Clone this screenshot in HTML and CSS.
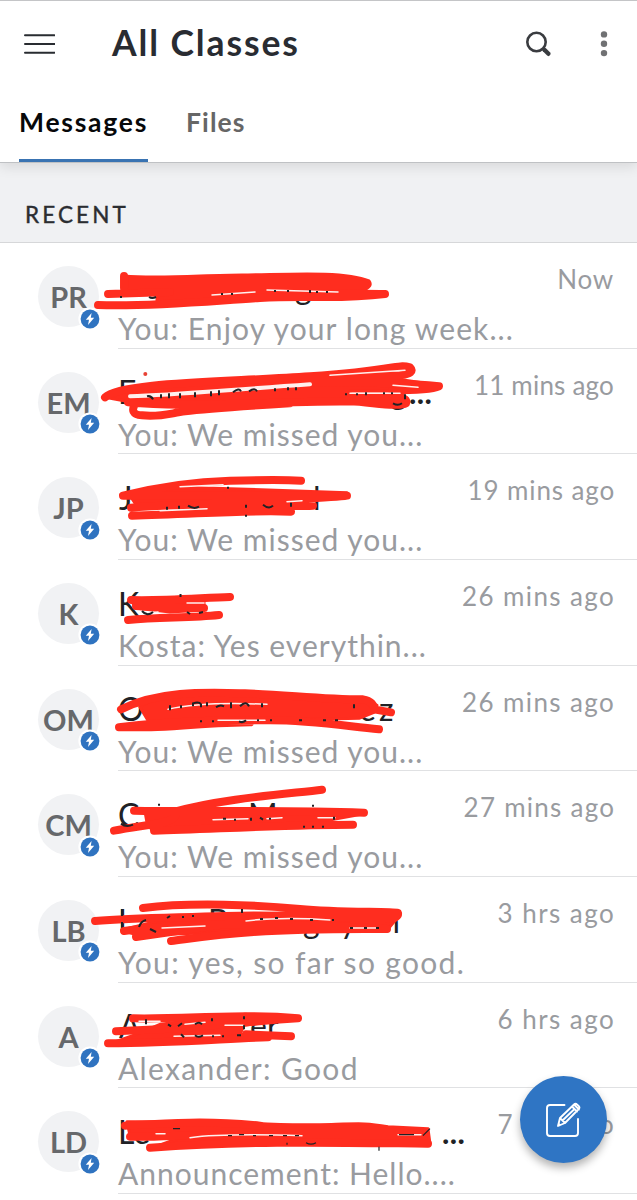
FILE: index.html
```html
<!DOCTYPE html>
<html lang="en">
<head>
<meta charset="utf-8">
<title>All Classes</title>
<link rel="stylesheet" href="styles.css">
</head>
<body>
<svg width="0" height="0" class="defs">
  <symbol id="bolt" viewBox="0 0 24 24">
    <circle cx="12" cy="12" r="11.6" fill="#fff"/>
    <circle cx="12" cy="12" r="9.4" fill="#2f73c0"/>
    <path d="M13.6 6 7.8 12.8h3.2L10 18l6.2-7.2h-3.4z" fill="#fff"/>
  </symbol>
</svg>
<div class="screen">
  <header class="top">
    <div class="bar">
      <svg class="menu" width="32" height="22" viewBox="0 0 32 22"><path d="M2 2.3h29.5M2 11h29.5M2 19.7h29.5" stroke="#292c31" stroke-width="2" stroke-linecap="round"/></svg>
      <h1 class="title">All Classes</h1>
      <svg class="search" width="28" height="28" viewBox="0 0 28 28" fill="none" stroke="#3a3c40"><circle cx="12.5" cy="12" r="9.2" stroke-width="2.6"/><path d="m19 18.8 1.5 1.5" stroke-width="2.7"/><path d="m20.4 19.8 4 4" stroke-width="4.4" stroke-linecap="round"/></svg>
      <svg class="more" width="8" height="28" viewBox="0 0 8 28" fill="#707173"><circle cx="4" cy="4.4" r="3.2"/><circle cx="4" cy="13.8" r="3.2"/><circle cx="4" cy="23.1" r="3.2"/></svg>
    </div>
    <nav class="tabs"><a class="tab active">Messages</a><a class="tab files">Files</a></nav>
  </header>
  <div class="section"><span>RECENT</span></div>
  <main class="list">
    <article class="row">
      <div class="avatar">PR<svg class="badge"><use href="#bolt"/></svg></div>
      <div class="body"><time class="t-now">Now</time><p class="wide">You: Enjoy your long week...</p></div>
      <svg class="marks" viewBox="0 243 637 105.67">
        <text class="name" x="295" y="299">g</text>
        <path class="fill" d="M124 276C160 279 205 275 242 275S342 270 369 281C372 285 369 287 366 289L350 298C320 299 282 297 263 299L157 306V295L123 293Z"/>
        <path class="line" d="M98 305C150 307 210 301 260 298S338 300 385 294M108 294 170 292M124 276V288M270 293C310 294 350 293 385 294"/>
        <path class="gap" d="M212 295 255 292M267 290 338 292"/>
        <path class="tick" d="M121 296v2M149 297q3 2 7 0M222 293v2M232 293v2M275 290v2M288 290v2M310 290v3M317 291v2M327 291v2"/>
      </svg>
    </article>
    <article class="row">
      <div class="avatar">EM<svg class="badge"><use href="#bolt"/></svg></div>
      <div class="body"><time class="t-11">11 mins ago</time><p>You: We missed you...</p></div>
      <svg class="marks" viewBox="0 348.67 637 105.67">
        <text class="name" x="118" y="404">E</text><text class="name" x="390" y="404">g</text><text class="name dots" x="409" y="404">...</text>
        <path class="fill" d="M105 397C113 386 160 382 202 382L310 381 405 380 439 385C440 389 431 389 399 391L350 391V402L212 403 132 402Z"/>
        <path class="line" d="M105 397C120 382 220 382 310 376S397 363 410 367Q416 373 400 375L310 382M310 382C350 382 400 382 439 386Q430 390 392 390M128 402C180 407 220 403 350 401C372 402 399 407 406 403Q408 396 392 397L350 397M136 402Q128 414 142 415C160 417 170 413 185 411S240 406 290 403"/>
        <path class="gap wide" d="M130 396C170 395 210 391 310 384"/><path class="gap" d="M330 375 405 370M393 385 418 387M350 393H400"/>
        <path class="tick" d="M147 396q4-1 6 3M161 394v4M169 393v5M180 393v5M195 392v5M211 391v5M219 390v5M233 392q6-5 8-1M249 391q6-4 8 0M275 388v3M288 387v3M296 387v3M346 393v2M357 393v2M366 392v3M384 392v2M392 392v2M405 394v5M393 403q5 3 9 0"/>
        <circle cx="145.3" cy="373.6" r="2" fill="#e84235"/>
      </svg>
    </article>
    <article class="row">
      <div class="avatar">JP<svg class="badge"><use href="#bolt"/></svg></div>
      <div class="body"><time class="t-19">19 mins ago</time><p>You: We missed you...</p></div>
      <svg class="marks" viewBox="0 454.34 637 105.67">
        <text class="name" x="119" y="510">J</text><text class="name" x="296" y="510">el</text>
        <path class="fill" d="M130 496C155 486 180 488 230 489L347 493 341 498 278 503 203 506 138 508Z"/>
        <path class="line" d="M123 496C155 488 190 482 230 481S285 480 301 481M123 496H347C330 499 280 499 200 505M131 508C200 502 280 508 313 506M132 516C190 515 245 510 291 512"/>
        <path class="gap" d="M180 487 223 485M160 511 207 509M287 502 302 501"/>
        <path class="tick" d="M167 507v3M179 506v3M188 506q6 4 11 1M228 487v2M246 515v2M246 505v3M263 505q6 5 10 1M291 503v4"/>
      </svg>
    </article>
    <article class="row">
      <div class="avatar">K<svg class="badge"><use href="#bolt"/></svg></div>
      <div class="body"><time class="t-26">26 mins ago</time><p>Kosta: Yes everythin...</p></div>
      <svg class="marks" viewBox="0 560 637 105.67">
        <text class="name" x="118" y="616">K</text>
        <path class="fill" d="M132 601 184 597 204 602V610L170 612 135 608Z"/>
        <path class="line" d="M131 600C160 601 200 598 230 597M136 606C160 608 180 607 204 608M128 620C160 617 190 618 219 615"/>
        <path class="gap" d="M187 603H204M148 613 158 612"/>
        <path class="tick" d="M180.5 594v3M142 611q5 6 11 1M187 612l3 2M199 613l4-1"/>
      </svg>
    </article>
    <article class="row">
      <div class="avatar">OM<svg class="badge"><use href="#bolt"/></svg></div>
      <div class="body"><time class="t-26">26 mins ago</time><p>You: We missed you...</p></div>
      <svg class="marks" viewBox="0 665.67 637 105.67">
        <text class="name" x="118" y="721">O</text><text class="name" x="359" y="721">e</text><text class="name" x="379" y="721">z</text>
        <path class="fill" d="M140 707C160 690 205 689 235 692S330 698 363 698L377 705 374 712 359 718 270 720 152 727Z"/>
        <path class="line" d="M121 709C160 690 205 692 245 693S320 699 363 699Q374 701 374 709L391 712M119 727C170 720 230 720 270 720S340 725 379 729M119 727H151C180 726 200 723 250 722"/>
        <path class="gap" d="M168 709C190 704 220 702 267 704M218 720H265"/>
        <path class="tick" d="M170 705v5M181 705v3M193 706v-3q6-2 8 1v3M207 706v-4M216 707q4-3 8-1M231 702v6M240 706q6-6 9 0M262 703v4M354 704v4M201 720v2M213 720v2M239 721q4 2 7-1M258 719v2M271 719v2M299 720h3M323 720h3M335 720h3"/>
      </svg>
    </article>
    <article class="row">
      <div class="avatar">CM<svg class="badge"><use href="#bolt"/></svg></div>
      <div class="body"><time class="t-27">27 mins ago</time><p>You: We missed you...</p></div>
      <svg class="marks" viewBox="0 771.34 637 105.67">
        <text class="name" x="118" y="827">C</text><text class="name" x="248" y="827">M</text>
        <path class="fill" d="M145 812 240 811 351 811 364 814 320 822 353 826 240 828 153 832 147 823Z"/>
        <path class="line" d="M134 811C200 812 270 810 364 813M114 831C150 824 180 824 175 812C220 799 290 794 322 790M154 831C220 829 290 825 353 825"/>
        <path class="gap" d="M213 820 248 819M267 819 282 818M318 818H335"/>
        <path class="tick" d="M121 824q5 4 12 1M223 819h3M235 819v2M251 818v3M260 818l3 2M270 818v2M304 826v2M313 826v2M323 826v2M334 817v3M159 804v2M313 805v2"/>
      </svg>
    </article>
    <article class="row">
      <div class="avatar">LB<svg class="badge"><use href="#bolt"/></svg></div>
      <div class="body"><time class="t-hrs">3 hrs ago</time><p class="wider">You: yes, so far so good.</p></div>
      <svg class="marks" viewBox="0 877 637 105.67">
        <text class="name" x="118" y="933">L</text><text class="name" x="208" y="933">B</text><text class="name" x="303" y="933">g</text><text class="name" x="340" y="933">y</text><text class="name" x="382" y="933">n</text>
        <path class="fill" d="M166 919 225 915 288 913 380 912 398 917 388 929 270 931 137 935 122 930Z"/>
        <path class="line" d="M143 908C190 902 260 905 300 909S390 911 398 913Q399 918 388 919M95 921C130 918 160 918 225 916S340 919 388 918M124 931C165 925 250 921 387 929M136 937 240 922M171 941C210 936 250 928 387 929"/>
        <path class="gap" d="M162 928 205 926M246 921C270 918 300 918 330 920M350 928H377"/>
        <path class="tick" d="M122 909v7M122 922v5M139 927q2-6 7-7M150 929l6 3M167 918l3-2M183 918v-2M193 917v-2M242 909v4M260 919h3M275 918h3M290 919h3M310 920h3M332 920h2M350 928h3M364 928h3M376 928h3"/>
      </svg>
    </article>
    <article class="row">
      <div class="avatar">A<svg class="badge"><use href="#bolt"/></svg></div>
      <div class="body"><time class="t-hrs">6 hrs ago</time><p class="wider">Alexander: Good</p></div>
      <svg class="marks" viewBox="0 982.67 637 105.67">
        <text class="name" x="119" y="1038">A</text><text class="name" x="250" y="1038">er</text>
        <path class="fill" d="M160 1024 245 1014 298 1018 244 1025 240 1034 268 1037 210 1039 108 1044 136 1034Z"/>
        <path class="line" d="M133 1018C190 1019 240 1013 298 1018Q240 1022 180 1028L116 1031M108 1043C170 1043 230 1038 268 1037M246 1034 291 1036"/>
        <path class="gap" d="M139 1021 160 1021M185 1024 205 1022M225 1025H243M174 1036 220 1035"/>
        <path class="tick" d="M146 1019v5M168 1024l3 2M178 1026l4-3M195 1024q4-3 7 0M212 1018v3M244 1016v3M244 1025v4M181 1034l3 3M195 1035q3 3 8 0M213 1035v2M223 1035v2M237 1035h4"/>
      </svg>
    </article>
    <article class="row">
      <div class="avatar">LD<svg class="badge"><use href="#bolt"/></svg></div>
      <div class="body"><time class="t-hrs">7 hrs ago</time><p>Announcement: Hello....</p></div>
      <svg class="marks" viewBox="0 1088.34 637 105.67">
        <text class="name" x="118" y="1144">Le</text><text class="name dots" x="442" y="1144">...</text>
        <path class="fill" d="M127 1122C160 1123 195 1120 230 1122S280 1126 320 1125 365 1123 388 1127L428 1129 430 1144 370 1143 240 1144 150 1149 180 1138 130 1136Z"/>
        <path class="line" d="M125 1126C170 1124 200 1120 260 1126M130 1137C165 1138 205 1133 235 1137M150 1148C250 1141 335 1143 428 1144"/>
        <path class="gap" d="M190 1138C220 1134 270 1135 302 1136M398 1135H421M156 1134H165"/>
        <path class="tick thin" d="M173 1129h7M228 1136h4M239 1135h5M253 1136h3M269 1136h4M283 1136h4M295 1136h4M399 1135h15M423 1136l7-7M287 1143v2M306 1143q5 3 10 0M379 1147v4"/>
      </svg>
    </article>
  </main>
  <button class="compose" aria-label="Compose">
    <svg width="40" height="40" viewBox="0 0 40 40" fill="none" stroke="#fff" stroke-width="1.9" stroke-linecap="round" stroke-linejoin="round"><path d="M20.5 5H6q-3 0-3 3v25q0 3 3 3h25q3 0 3-3V19"/><path d="m14 26 2-8L30 4.5q1.5-1.5 3.2.1l1.4 1.3q1.6 1.6.1 3.1L21 23zM16 18l5 5M28 6.5l5 5M30 4.5l5 5M18.5 20.5 30.5 9M14.8 24l1.2 1.2"/></svg>
  </button>
</div>
</body>
</html>
```
FILE: styles.css
```css
* { box-sizing: border-box; }
body { margin: 0; background: #fff; font-family: Lato, "Open Sans", sans-serif; }
.defs { display: block; }
.screen { position: relative; width: 637px; height: 1200px; overflow: hidden; background: #fff; }
.top { position: relative; z-index: 1; height: 163px; border-top: 1px solid #c4c5c7; border-bottom: 1px solid #bfc1c4; background: #fff; box-shadow: 0 4px 12px rgba(0,0,0,.1); }
.bar { display: flex; align-items: center; height: 86px; padding: 0 29px 0 23px; }
.title { flex: 1; margin: -2px 0 0 57px; font-size: 35.5px; line-height: 40px; font-weight: 700; color: #292c32; letter-spacing: 1.9px; }
.more { margin-left: 48px; }
.tabs { display: flex; gap: 39px; height: 75px; padding-left: 19px; }
.tab { height: 75px; padding-top: 17px; font-size: 26.5px; line-height: 36px; font-weight: 700; color: #666; white-space: nowrap; }
.tab.active { width: 129px; color: #07080a; letter-spacing: 1.75px; border-bottom: 3px solid #3973b2; }
.tab.files { margin-left: -1px; letter-spacing: 1.1px; }
.section { height: 80px; padding: 36px 0 0 25px; background: #f0f1f3; border-bottom: 1px solid #d6d7d9; font-size: 22.5px; line-height: 31px; color: #2b2d31; letter-spacing: 3.1px; -webkit-text-stroke: .4px #2b2d31; }
.row { position: relative; display: flex; height: 105.67px; padding-left: 37px; }
.avatar { position: relative; flex: none; width: 61px; height: 61px; margin: 23px 0 0 1px; border-radius: 50%; background: #f1f2f4; text-align: center; font-size: 29px; line-height: 62px; font-weight: 700; color: #66686b; }
.badge { position: absolute; left: 40px; top: 40.5px; width: 24px; height: 24px; }
.body { display: flex; flex-direction: column; flex: 1; margin-left: 19px; padding-right: 23px; border-bottom: 1.5px solid #e0e1e3; color: #999b9f; font-weight: 400; white-space: nowrap; }
.body time { align-self: flex-end; margin-top: 20px; font-size: 26px; line-height: 32px; }
.t-now { letter-spacing: .8px; }
.t-11 { letter-spacing: .2px; }
.t-19 { letter-spacing: .9px; }
.t-26 { letter-spacing: 1.4px; }
.t-27 { letter-spacing: 1.25px; }
.t-hrs { letter-spacing: 1.45px; }
.t-19, .t-26, .t-27, .t-hrs { margin-right: -1.2px; }
.body p { margin: 15px 0 0; font-size: 30px; line-height: 36px; letter-spacing: 1px; }
.body p.wide { letter-spacing: 1.1px; }
.body p.wider { letter-spacing: 1.33px; }
.marks { position: absolute; left: 0; top: 0; width: 637px; height: 105.67px; overflow: visible; }
.name { font-size: 32px; fill: #202226; }
.name.dots { font-size: 31px; font-weight: 700; letter-spacing: .4px; }
.fill { fill: #ff2d1f; stroke: #ff2d1f; stroke-width: 3; stroke-linejoin: round; }
.line { fill: none; stroke: #ff2d1f; stroke-width: 8; stroke-linecap: round; stroke-linejoin: round; }
.gap { fill: none; stroke: #fff0ee; stroke-width: 1.5; stroke-linecap: round; }
.gap.wide { stroke-width: 4; }
.tick { fill: none; stroke: #202226; stroke-width: 2; }
.tick.thin { stroke-width: 1.2; }
.compose { position: absolute; left: 520px; top: 1076px; z-index: 2; display: flex; align-items: center; justify-content: center; width: 87px; height: 87px; padding: 0; border: 0; border-radius: 50%; background: #2f75c4; box-shadow: 0 5px 9px rgba(0,0,0,.3); }
```
